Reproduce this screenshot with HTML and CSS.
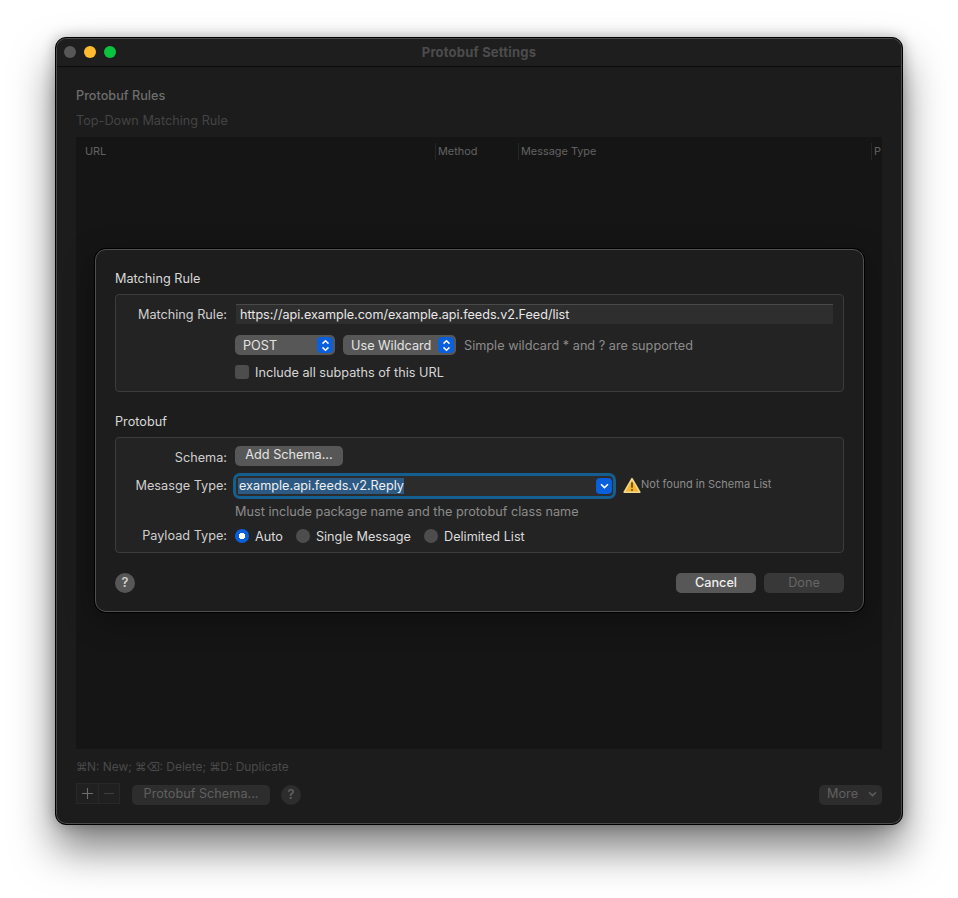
FILE: index.html
```html
<!DOCTYPE html>
<html lang="en">
<head>
    <meta charset="UTF-8">
    <title>Protobuf Settings</title>
    <link rel="stylesheet" href="styles.css">
</head>
<body>
    <div class="window">
        <div class="titlebar">
            <div class="lights">
                <span class="light light-grey"></span>
                <span class="light light-yellow"></span>
                <span class="light light-green"></span>
            </div>
            <div class="title">Protobuf Settings</div>
        </div>

        <div class="content">
            <div class="rules-title">Protobuf Rules</div>
            <div class="rules-sub">Top-Down Matching Rule</div>
            <div class="table">
                <div class="table-head">
                    <div class="col col-url">URL</div>
                    <div class="col col-method">Method</div>
                    <div class="col col-type">Message Type</div>
                    <div class="col col-p">P</div>
                </div>
            </div>
            <div class="shortcuts"><span class="key">⌘</span>N: New; <span class="key">⌘⌫</span>: Delete; <span class="key">⌘</span>D: Duplicate</div>
            <div class="toolbar">
                <div class="plus-minus">
                    <span class="pm-cell pm-plus">
                        <svg width="11" height="11" viewBox="0 0 11 11"><path d="M5.5 0v11M0 5.5h11" stroke="#6e6e6e" stroke-width="1.1"/></svg>
                    </span>
                    <span class="pm-cell">
                        <svg width="10" height="11" viewBox="0 0 10 11"><path d="M0 5.5h10" stroke="#3e3e3e" stroke-width="1.1"/></svg>
                    </span>
                </div>
                <div class="dim-btn schema-btn">Protobuf Schema...</div>
                <div class="dim-help">?</div>
                <div class="dim-btn more-btn">
                    More
                    <svg class="more-chevron" width="9" height="6" viewBox="0 0 9 6"><path d="M1 1.2l3.5 3.4L8 1.2" fill="none" stroke="#5e5e5e" stroke-width="1.5"/></svg>
                </div>
            </div>
        </div>

        <div class="sheet">
            <div class="group-title">Matching Rule</div>
            <div class="group group-rule">
                <div class="row row-url">
                    <div class="label">Matching Rule:</div>
                    <div class="text-input">https://api.example.com/example.api.feeds.v2.Feed/list</div>
                </div>
                <div class="row row-selects">
                    <div class="label"></div>
                    <div class="select select-post">
                        <span>POST</span>
                        <span class="stepper">
                            <svg width="9" height="13" viewBox="0 0 9 13"><path d="M1.5 4.6L4.5 1.8l3 2.8M1.5 8.4l3 2.8 3-2.8" fill="none" stroke="#fff" stroke-width="1.5"/></svg>
                        </span>
                    </div>
                    <div class="select select-wild">
                        <span>Use Wildcard</span>
                        <span class="stepper">
                            <svg width="9" height="13" viewBox="0 0 9 13"><path d="M1.5 4.6L4.5 1.8l3 2.8M1.5 8.4l3 2.8 3-2.8" fill="none" stroke="#fff" stroke-width="1.5"/></svg>
                        </span>
                    </div>
                    <div class="hint">Simple wildcard * and ? are supported</div>
                </div>
                <div class="row row-check">
                    <div class="label"></div>
                    <span class="checkbox"></span>
                    <span>Include all subpaths of this URL</span>
                </div>
            </div>

            <div class="group-title group-title-second">Protobuf</div>
            <div class="group group-proto">
                <div class="row row-schema">
                    <div class="label">Schema:</div>
                    <div class="button add-schema">Add Schema...</div>
                </div>
                <div class="row row-message">
                    <div class="label">Mesasge Type:</div>
                    <div class="combo">
                        <span class="selected-text">example.api.feeds.v2.Reply</span>
                        <span class="combo-arrow">
                            <svg width="9" height="6" viewBox="0 0 9 6"><path d="M1 1.2l3.5 3.4L8 1.2" fill="none" stroke="#fff" stroke-width="1.6"/></svg>
                        </span>
                    </div>
                    <svg class="warning" width="18" height="17" viewBox="0 0 18 17">
                        <path d="M9 1.6L16.8 15.2H1.2z" fill="#f2b632" stroke="#f4d88e" stroke-width="1.6" stroke-linejoin="round"/>
                        <path d="M9 5.2v5.6" stroke="#6b4a10" stroke-width="1.7"/>
                        <circle cx="9" cy="13" r="1" fill="#6b4a10"/>
                    </svg>
                    <span class="warning-text">Not found in Schema List</span>
                </div>
                <div class="row row-must">
                    <div class="label"></div>
                    <div class="hint">Must include package name and the protobuf class name</div>
                </div>
                <div class="row row-radio">
                    <div class="label">Payload Type:</div>
                    <span class="radio radio-on"></span><span class="radio-label">Auto</span>
                    <span class="radio"></span><span class="radio-label">Single Message</span>
                    <span class="radio"></span><span class="radio-label">Delimited List</span>
                </div>
            </div>

            <div class="sheet-footer">
                <div class="help">?</div>
                <div class="button footer-btn cancel">Cancel</div>
                <div class="button footer-btn done">Done</div>
            </div>
        </div>
    </div>
</body>
</html>
```

FILE: styles.css
```css
* {
    box-sizing: border-box;
}
body {
    margin: 0;
    height: 898px;
    overflow: hidden;
    background-color: #ffffff;
    font-family: Inter, "Noto Sans", sans-serif;
    font-size: 12.7px;
    color: #dcdcdc;
}

/* window */
.window {
    position: relative;
    width: 848px;
    height: 788px;
    margin: 37px 0 0 55px;
    background-color: #1c1c1c;
    border: 1px solid #000;
    border-radius: 11px;
    box-shadow: inset 0 0 0 1px #4a4a4a, 0 24px 42px rgba(0, 0, 0, 0.5), 0 0 14px rgba(0, 0, 0, 0.28);
}
.titlebar {
    position: relative;
    display: flex;
    align-items: center;
    height: 28px;
    margin: 1px 1px 0;
    padding-bottom: 2px;
    border-bottom: 1px solid #0b0b0b;
    border-radius: 10px 10px 0 0;
    background-color: #1e1e1e;
}
.lights {
    display: flex;
    gap: 8px;
    padding-left: 7px;
}
.light {
    width: 12px;
    height: 12px;
    border-radius: 50%;
}
.light-grey {
    background-color: #575757;
}
.light-yellow {
    background-color: #febb2e;
}
.light-green {
    background-color: #0ac43f;
}
.title {
    position: absolute;
    left: 0;
    right: 0;
    text-align: center;
    font-size: 13px;
    font-weight: 700;
    letter-spacing: 0.2px;
    color: #4c4c4c;
}

/* window content, dimmed behind the sheet */
.content {
    padding: 20px 20px 0;
}
.rules-title {
    height: 18px;
    line-height: 18px;
    color: #6d6d6d;
    font-weight: 500;
}
.rules-sub {
    height: 18px;
    margin-top: 7px;
    line-height: 18px;
    color: #444;
}
.table {
    height: 612px;
    margin-top: 7px;
    background-color: #151515;
}
.table-head {
    display: flex;
    height: 28px;
    align-items: center;
    color: #626262;
    font-size: 10.9px;
}
.col {
    height: 17px;
    line-height: 17px;
    padding-left: 2px;
    border-left: 1px solid #262626;
}
.col-url {
    width: 359px;
    padding-left: 9px;
    border-left: none;
}
.col-method {
    width: 83px;
}
.col-type {
    width: 353px;
}
.col-p {
    width: 10px;
    overflow: hidden;
}
.shortcuts {
    height: 18px;
    margin-top: 9px;
    line-height: 18px;
    font-size: 11.9px;
    color: #4a4a4a;
}
.key {
    font-size: 11.5px;
    letter-spacing: -0.5px;
}
.toolbar {
    display: flex;
    align-items: center;
    height: 22px;
    margin-top: 7px;
}
.plus-minus {
    display: flex;
    width: 44px;
    height: 21px;
    margin-bottom: 1px;
    border: 1px solid #282828;
    background-color: #202020;
}
.pm-cell {
    display: flex;
    flex: 1;
    align-items: center;
    justify-content: center;
}
.pm-plus {
    border-right: 1px solid #282828;
}
.dim-btn {
    height: 20px;
    line-height: 18px;
    margin-top: 1px;
    border-radius: 5px;
    background-color: #2d2d2d;
    color: #606060;
}
.schema-btn {
    width: 138px;
    margin-left: 12px;
    text-align: center;
}
.dim-help {
    width: 20px;
    height: 20px;
    margin-top: 1px;
    margin-left: 11px;
    border-radius: 50%;
    background-color: #2d2d2d;
    color: #606060;
    text-align: center;
    line-height: 20px;
    font-weight: 600;
}
.more-btn {
    display: flex;
    align-items: center;
    justify-content: space-between;
    width: 63px;
    margin-left: auto;
    padding: 0 5px 2px 8px;
}

/* sheet */
.sheet {
    position: absolute;
    left: 39px;
    top: 211px;
    width: 769px;
    height: 363px;
    padding: 19px 19px 0;
    background-color: #1d1d1d;
    border: 1px solid #505050;
    border-radius: 11px;
    box-shadow: 0 0 0 1px #000, 0 8px 30px rgba(0, 0, 0, 0.35);
}
.group-title {
    height: 18px;
    line-height: 20px;
    color: #d8d8d8;
}
.group-title-second {
    margin-top: 20px;
}
.group {
    margin-top: 7px;
    background-color: #232323;
    border: 1px solid #3c3c3c;
    border-radius: 4px;
}
.group-rule {
    height: 98px;
    padding-top: 9px;
}
.group-proto {
    height: 116px;
    padding-top: 8px;
}
.row {
    display: flex;
    align-items: center;
}
.label {
    flex: none;
    width: 111px;
    margin-right: 9px;
    text-align: right;
    color: #cfcfcf;
}
.row-schema .label {
    margin-top: 2px;
}
.row-radio .label {
    margin-bottom: 2px;
}
.text-input {
    width: 597px;
    height: 20px;
    padding-left: 4px;
    line-height: 20px;
    font-size: 12.6px;
    background-color: #2e2e2e;
    border-top: 1px solid #4a4a4a;
    color: #e8e8e8;
}
.row-url {
    height: 20px;
}
.row-selects {
    height: 20px;
    margin-top: 11px;
}
.row-selects .label, .row-check .label, .row-must .label, .row-schema .label, .row-message .label, .row-radio .label {
    margin-right: 8px;
}
.select {
    display: flex;
    align-items: center;
    justify-content: space-between;
    height: 20px;
    padding: 0 2px 0 8px;
    border-radius: 5px;
    background-color: #575757;
    color: #e4e4e4;
}
.select-post {
    width: 100px;
}
.select-wild {
    width: 113px;
    margin-left: 8px;
}
.stepper {
    display: flex;
    align-items: center;
    justify-content: center;
    width: 16px;
    height: 16px;
    border-radius: 4px;
    background-color: #0a5fdc;
}
.hint {
    color: #8c8c8c;
}
.row-selects .hint {
    margin-left: 8px;
}
.row-check {
    height: 16px;
    margin-top: 9px;
    color: #d6d6d6;
}
.checkbox {
    width: 14px;
    height: 14px;
    margin-right: 6px;
    border-radius: 3px;
    background-color: #4d4d4d;
}
.button {
    height: 20px;
    line-height: 20px;
    border-radius: 5px;
    background-color: #575757;
    color: #e4e4e4;
    text-align: center;
}
.add-schema {
    width: 108px;
    line-height: 18px;
}
.row-schema {
    height: 20px;
}
.row-message {
    height: 23px;
    margin-top: 8px;
}
.combo {
    position: relative;
    display: flex;
    align-items: center;
    width: 377px;
    height: 20px;
    margin-left: 1px;
    padding-left: 2px;
    background-color: #2c2c2c;
    box-shadow: 0 0 0 3px #155f90;
    border-radius: 4px;
}
.selected-text {
    height: 16px;
    padding-left: 1px;
    line-height: 16px;
    background-color: #2c5a84;
    color: #f0f0f0;
}
.combo-arrow {
    position: absolute;
    right: 1px;
    top: 2px;
    display: flex;
    align-items: center;
    justify-content: center;
    width: 16px;
    height: 16px;
    border-radius: 4px;
    background-color: #0a5fdc;
}
.warning {
    margin-left: 10px;
}
.warning-text {
    font-size: 11px;
    color: #8c8c8c;
    margin-bottom: 4px;
}
.row-must {
    height: 18px;
    margin-top: 5px;
}
.row-radio {
    height: 18px;
    margin-top: 7px;
}
.radio {
    width: 14px;
    height: 14px;
    margin-right: 6px;
    border-radius: 50%;
    background-color: #4d4d4d;
}
.radio-on {
    background-color: #0a5fdc;
    background-image: radial-gradient(circle, #fff 0 3px, #0a5fdc 3.5px);
}
.radio-label {
    margin-right: 13px;
    color: #dcdcdc;
}
.sheet-footer {
    display: flex;
    align-items: center;
    margin-top: 20px;
}
.help {
    width: 20px;
    height: 20px;
    margin-right: auto;
    border-radius: 50%;
    background-color: #575757;
    color: #d0d0d0;
    text-align: center;
    line-height: 20px;
    font-weight: 600;
}
.footer-btn {
    width: 80px;
}
.cancel {
    font-weight: 500;
    color: #eeeeee;
}
.done {
    margin-left: 8px;
    background-color: #383838;
    color: #666;
}
```
